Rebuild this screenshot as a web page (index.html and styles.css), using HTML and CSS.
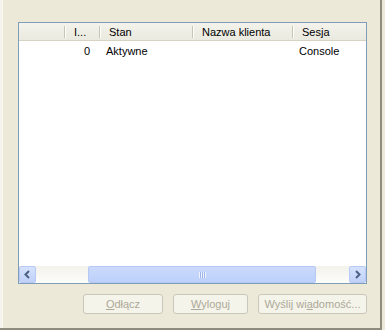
FILE: index.html
```html
<!DOCTYPE html>
<html>
<head>
<meta charset="utf-8">
<link rel="stylesheet" href="styles.css">
</head>
<body>
<div class="panel">
  <div class="list">
    <div class="header">
      <div class="hcell"></div>
      <div class="hcell">I...</div>
      <div class="hcell">Stan</div>
      <div class="hcell">Nazwa klienta</div>
      <div class="hcell">Sesja</div>
    </div>
    <div class="row">
      <div class="cell"></div>
      <div class="cell num">0</div>
      <div class="cell">Aktywne</div>
      <div class="cell"></div>
      <div class="cell">Console</div>
    </div>
    <div class="spacer"></div>
    <div class="hscroll">
      <div class="arrow">
        <svg width="9" height="9" viewBox="0 0 9 9"><path d="M6 1 L2.5 4.5 L6 8" fill="none" stroke="#4D6185" stroke-width="2"/></svg>
      </div>
      <div class="track">
        <div class="thumb"><span class="grip"></span></div>
      </div>
      <div class="arrow">
        <svg width="9" height="9" viewBox="0 0 9 9"><path d="M3 1 L6.5 4.5 L3 8" fill="none" stroke="#4D6185" stroke-width="2"/></svg>
      </div>
    </div>
  </div>
  <div class="buttons">
    <div class="btn b1"><u>O</u>dłącz</div>
    <div class="btn b2"><u>W</u>yloguj</div>
    <div class="btn b3">Wyślij wi<u>a</u>domość...</div>
  </div>
</div>
</body>
</html>
```
FILE: styles.css
```css
html, body {
  margin: 0;
  padding: 0;
  background: #ECE9D8;
  width: 385px;
  height: 330px;
  overflow: hidden;
  font-family: Tahoma, "Liberation Sans", Arial, sans-serif;
  font-size: 11px;
}
.panel {
  box-sizing: border-box;
  width: 382px;
  height: 330px;
  background: #ECE9D8;
  border-right: 2px solid #8E8C7F;
  border-bottom: 2px solid #8E8C7F;
  box-shadow: inset 2px 0 0 #F5F4EC, inset 3px 0 0 #F9F8F2;
  padding: 22px 0 0 18px;
}
.list {
  box-sizing: border-box;
  width: 349px;
  height: 262px;
  border: 1px solid #7F9DB9;
  background: #fff;
  display: flex;
  flex-direction: column;
}
.header, .row {
  display: grid;
  grid-template-columns: 45px 35px 93px 100px 1fr;
}
.header {
  height: 18px;
  background: linear-gradient(#F3F2EC, #EBEAE0);
  border-bottom: 1px solid #D6D3C2;
  box-sizing: border-box;
  color: #000;
}
.hcell {
  position: relative;
  padding-left: 10px;
  padding-top: 1px;
  line-height: 17px;
  white-space: nowrap;
  overflow: hidden;
}
.hcell + .hcell::before {
  content: "";
  position: absolute;
  left: 0;
  top: 3px;
  width: 1px;
  height: 12px;
  background: #C7C5B2;
  box-shadow: 1px 0 0 #fff;
}
.row {
  height: 17px;
  padding-top: 2px;
  line-height: 17px;
  color: #000;
}
.cell {
  padding-left: 7px;
  white-space: nowrap;
}
.cell.num {
  text-align: right;
  padding-right: 9px;
  padding-left: 0;
}
.spacer {
  flex: 1;
}
.hscroll {
  height: 17px;
  display: flex;
  background: linear-gradient(#F3F2EC, #FDFDFA);
}
.arrow {
  box-sizing: border-box;
  width: 17px;
  height: 17px;
  border: 1px solid #B7CAF5;
  border-radius: 2px;
  background: linear-gradient(#D6E2FD, #C0D1F8);
  display: flex;
  align-items: center;
  justify-content: center;
}
.track {
  flex: 1;
  padding-left: 52px;
  padding-right: 33px;
  display: flex;
}
.thumb {
  box-sizing: border-box;
  flex: 1;
  height: 17px;
  border: 1px solid #B6C9F4;
  border-radius: 2px;
  background: linear-gradient(#CBDAFC, #BCD0FA);
  display: flex;
  align-items: center;
  justify-content: center;
}
.grip {
  width: 7px;
  height: 6px;
  background: repeating-linear-gradient(90deg, #EEF3FE 0 1px, #9DB4E8 1px 2px);
}
.buttons {
  display: flex;
  justify-content: flex-end;
  gap: 10px;
  width: 349px;
  margin-top: 10px;
}
.btn {
  box-sizing: border-box;
  height: 20px;
  line-height: 18px;
  border: 1px solid #C9C7BA;
  border-radius: 3px;
  background: #F5F4EA;
  color: #ACA899;
  text-align: center;
  white-space: nowrap;
}
.b1 { width: 80px; }
.b2 { width: 75px; }
.b3 { width: 109px; }
```
